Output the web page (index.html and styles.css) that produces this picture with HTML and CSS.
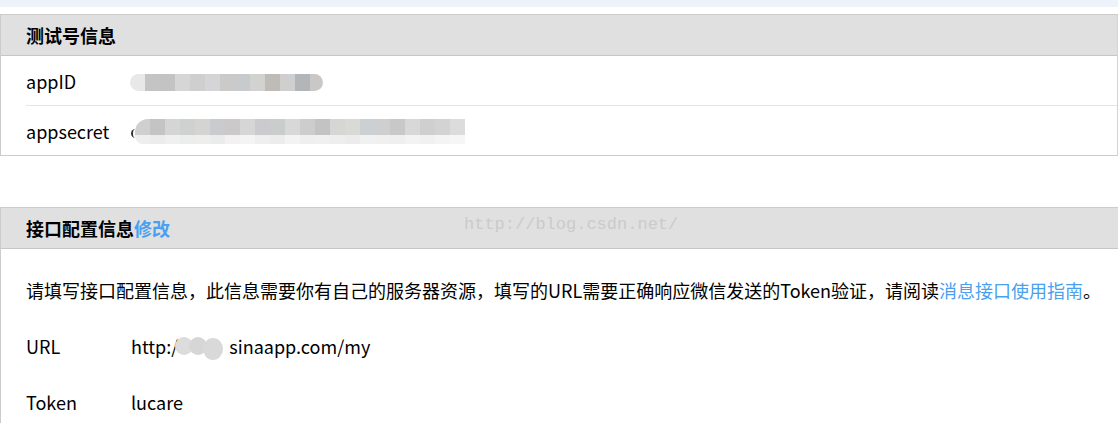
FILE: index.html
```html
<!DOCTYPE html>
<html lang="zh">
<head>
<meta charset="utf-8">
<title>测试号信息</title>
<link rel="stylesheet" href="styles.css">
</head>
<body>
<div class="topbar"></div>

<section class="panel panel-first">
  <div class="panel-head"><h2 class="title">测试号信息</h2></div>
  <div class="row row-divided">
    <div class="label">appID</div>
    <div class="value">
      <span class="mosaic mosaic-id">
        <i style="background:#e8e8e8"></i><i style="background:#c4c4c4"></i><i style="background:#c3c3c3"></i><i style="background:#d6d6d6"></i><i style="background:#cfcfcf"></i><i style="background:#d5d5d8"></i><i style="background:#cccac9"></i><i style="background:#c8cbcd"></i><i style="background:#d2d2d0"></i><i style="background:#bfbbb7"></i><i style="background:#cfcfcf"></i><i style="background:#b2b6b9"></i><i style="background:#cac8c6"></i><i style="background:#dadcdc"></i>
      </span>
    </div>
  </div>
  <div class="row">
    <div class="label">appsecret</div>
    <div class="value">
      <span class="arc"></span><span class="mosaic mosaic-secret">
        <span class="mrow mtop"><i style="background:#cfcfcf"></i><i style="background:#c4c4c6"></i><i style="background:#d5d5d5"></i><i style="background:#cfd0d0"></i><i style="background:#d6d3d3"></i><i style="background:#c9cbce"></i><i style="background:#cbc9c9"></i><i style="background:#d6d6d6"></i><i style="background:#cbcbcd"></i><i style="background:#cbcdcd"></i><i style="background:#d8d8d8"></i><i style="background:#cdcdcd"></i><i style="background:#c3c3c3"></i><i style="background:#d6d6d4"></i><i style="background:#d9d9d7"></i><i style="background:#cdd0d2"></i><i style="background:#cfcfcf"></i><i style="background:#c8c8c8"></i><i style="background:#d8d8d8"></i><i style="background:#cfcfcf"></i><i style="background:#d3d3d3"></i><i style="background:#dcdcdc"></i></span>
        <span class="mrow mbot"><i style="background:#eeeeee"></i><i style="background:#ececec"></i><i style="background:#f0f0f0"></i><i style="background:#ededed"></i><i style="background:#eeeeee"></i><i style="background:#ebebeb"></i><i style="background:#f2f2f2"></i><i style="background:#f4f4f4"></i><i style="background:#efefef"></i><i style="background:#ececec"></i><i style="background:#f3f3f3"></i><i style="background:#efefef"></i><i style="background:#f0f0f0"></i><i style="background:#eeeeee"></i><i style="background:#ececec"></i><i style="background:#f1f1f1"></i><i style="background:#f0f0f0"></i><i style="background:#efefef"></i><i style="background:#f3f3f3"></i><i style="background:#f1f1f1"></i><i style="background:#f4f4f4"></i><i style="background:#f6f6f6"></i></span>
      </span>
    </div>
  </div>
</section>

<section class="panel panel-second">
  <div class="panel-head">
    <h2 class="title">接口配置信息<a class="link" href="#">修改</a></h2>
    <span class="watermark">http://blog.csdn.net/</span>
  </div>
  <div class="panel-body">
    <p class="desc">请填写接口配置信息，此信息需要你有自己的服务器资源，填写的URL需要正确响应微信发送的Token验证，请阅读<a class="link" href="#">消息接口使用指南</a>。</p>
    <div class="line">
      <div class="label">URL</div>
      <div class="value">http:/<span class="blob"><i></i><i></i><i></i></span>sinaapp.com/my</div>
    </div>
    <div class="line">
      <div class="label">Token</div>
      <div class="value">lucare</div>
    </div>
  </div>
</section>
</body>
</html>
```

FILE: styles.css
```css
html, body {
  margin: 0;
  padding: 0;
  background: #ffffff;
  overflow: hidden;
}
body {
  font-family: "Noto Sans CJK SC", "Noto Sans", sans-serif;
  font-size: 18px;
  color: #000000;
}
.topbar {
  height: 7px;
  background: #eef2fa;
}
.panel {
  border: 1px solid #cccccc;
  border-right-color: #d4d4d4;
}
.panel-first {
  margin-top: 7px;
}
.panel-second {
  margin-top: 51px;
  border-right: none;
  border-bottom: none;
}
.panel-head {
  position: relative;
  height: 40px;
  background: #e0e0e0;
  border-bottom: 1px solid #c6c6c6;
  display: flex;
  align-items: center;
  padding-left: 25px;
}
.title {
  margin: 0;
  font-size: 18px;
  font-weight: 700;
  line-height: 24px;
}
.link {
  color: #4a9ff0;
  text-decoration: none;
  font-weight: inherit;
}
.title .link {
  font-weight: 700;
}
.watermark {
  position: absolute;
  left: 463px;
  top: 5px;
  font-family: "Liberation Mono", monospace;
  font-size: 17px;
  line-height: 24px;
  color: #cbcbcb;
}
.row {
  height: 49px;
  display: flex;
  align-items: center;
  margin-left: 25px;
  line-height: 24px;
}
.row-divided {
  border-bottom: 1px solid #e4e4e4;
}
.label {
  width: 105px;
  flex: none;
}
.value {
  display: flex;
  align-items: center;
  white-space: nowrap;
}
.mosaic {
  display: inline-flex;
  overflow: hidden;
}
.mosaic i {
  display: block;
  width: 15px;
  flex: none;
}
.mosaic-id {
  height: 17px;
  margin-top: 4px;
  border-radius: 9px;
  width: 193px;
  margin-left: -1px;
}
.mosaic-id i {
  height: 17px;
}
.arc {
  display: inline-block;
  width: 6px;
  height: 9px;
  margin-top: 5px;
  border-left: 2px solid #333;
  border-radius: 5px 0 0 5px;
  box-sizing: border-box;
}
.mosaic-secret {
  flex-direction: column;
  width: 340px;
  height: 25px;
  margin-top: 2px;
  margin-left: -2px;
  border-radius: 13px 6px 13px 8px;
}
.mrow {
  display: flex;
}
.mtop i {
  height: 16px;
}
.mbot i {
  height: 9px;
}
.panel-body {
  padding: 29px 25px 9px 25px;
}
.desc {
  margin: 0;
  line-height: 24px;
  white-space: nowrap;
}
.line {
  display: flex;
  align-items: center;
  margin-top: 32px;
  line-height: 24px;
}
.blob {
  display: inline-flex;
  align-items: center;
  width: 54px;
  height: 24px;
  margin-left: -3px;
}
.blob i {
  display: block;
  width: 18px;
  height: 18px;
  border-radius: 50%;
  background: #dcdcdc;
  margin-right: -4px;
  flex: none;
}
.blob i:nth-child(2) {
  background: #d6d6d6;
}
.blob i:nth-child(3) {
  width: 20px;
  height: 22px;
  margin-top: 6px;
  background: #d9d9d9;
}
```
